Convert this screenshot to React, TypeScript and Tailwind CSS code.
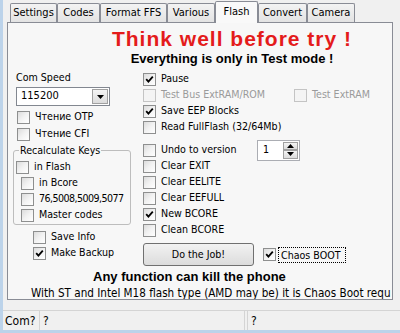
import React from "react";

const UI = "font-['DejaVu_Sans_Condensed','Liberation_Sans',sans-serif]";

function Box({ checked, disabled }: { checked?: boolean; disabled?: boolean }) {
  return (
    <span
      className={
        disabled
          ? "w-[13px] h-[13px] shrink-0 border border-[#c4c4c4] bg-[#f4f4f4] flex items-center justify-center"
          : "w-[13px] h-[13px] shrink-0 border border-[#8e8f8f] bg-gradient-to-br from-[#dcdcdc] via-[#f2f2f2] to-[#ffffff] flex items-center justify-center"
      }
    >
      {checked && (
        <svg width="9" height="9" viewBox="0 0 9 9">
          <path d="M1.2 4.2 L3.4 6.6 L7.8 1.6" fill="none" stroke="#000" strokeWidth="1.8" />
        </svg>
      )}
    </span>
  );
}

function Check({
  label,
  checked,
  disabled,
  className = "",
  labelClass = "",
}: {
  label: string;
  checked?: boolean;
  disabled?: boolean;
  className?: string;
  labelClass?: string;
}) {
  return (
    <div className={"flex items-center h-[16px] gap-[5px] whitespace-nowrap " + className}>
      <Box checked={checked} disabled={disabled} />
      <span className={(disabled ? "text-[#9a9a9a] " : "text-black ") + labelClass}>{label}</span>
    </div>
  );
}

function Tab({ label, w, active }: { label: string; w: string; active?: boolean }) {
  return active ? (
    <div
      className={
        w +
        " h-[22px] -mb-[1px] relative z-10 border border-b-0 border-[#898c95] bg-[#f9f9f9] rounded-t-[2px] flex items-start justify-center pt-[2px]"
      }
    >
      {label}
    </div>
  ) : (
    <div
      className={
        w +
        " h-[19px] border border-b-0 border-[#898c95] bg-gradient-to-b from-[#f3f3f3] to-[#e3e3e3] rounded-t-[2px] flex items-center justify-center"
      }
    >
      {label}
    </div>
  );
}

function TriDown() {
  return (
    <svg width="7" height="4" viewBox="0 0 7 4">
      <path d="M0 0 H7 L3.5 4 Z" fill="#000" />
    </svg>
  );
}
function TriUp() {
  return (
    <svg width="7" height="4" viewBox="0 0 7 4">
      <path d="M0 4 H7 L3.5 0 Z" fill="#000" />
    </svg>
  );
}

export default function App() {
  return (
    <div className={"w-[400px] h-[333px] overflow-hidden bg-[#f0f0f0] text-[10.6px] text-black border-l-[3px] border-b-[3px] border-[#bcd3ea] flex flex-col " + UI}>
      {/* tabs */}
      <div className="h-[22px] flex items-end pl-[7px] relative z-10 shrink-0 text-[11px]">
        <Tab label="Settings" w="w-[47px]" />
        <Tab label="Codes" w="w-[43px]" />
        <Tab label="Format FFS" w="w-[67px]" />
        <Tab label="Various" w="w-[48px]" />
        <Tab label="Flash" w="w-[43px]" active />
        <Tab label="Convert" w="w-[49px]" />
        <Tab label="Camera" w="w-[48px]" />
      </div>

      {/* panel */}
      <div className="ml-[4px] w-[386px] h-[278px] shrink-0 border border-[#898c95] bg-[#f7f7f7] overflow-hidden flex flex-col">
        <div className="mt-[3px] h-[26px] leading-[26px] pl-[64px] text-center font-bold text-[21px] tracking-[1px] text-[#e41b1b] font-['Liberation_Sans',sans-serif] whitespace-nowrap">
          Think well before try !
        </div>
        <div className="h-[14px] leading-[14px] pl-[64px] text-center font-bold text-[13px] font-['Liberation_Sans',sans-serif] whitespace-nowrap">
          Everything is only in Test mode !
        </div>

        <div className="flex items-start h-[214px]">
          {/* left column */}
          <div className="w-[135px] shrink-0 flex flex-col">
            <div className="mt-[4px] ml-[8px] h-[14px] leading-[14px]">Com Speed</div>
            <div className="mt-[3px] ml-[8px] w-[94px] h-[19px] border border-[#828790] bg-white flex items-center text-[11px]">
              <span className="flex-1 pl-[4px]">115200</span>
              <span className="w-[16px] h-[15px] mr-[1px] border border-[#a0a0a0] bg-gradient-to-b from-[#f4f4f4] to-[#dcdcdc] flex items-center justify-center">
                <TriDown />
              </span>
            </div>
            <Check label="Чтение OTP" className="mt-[3px] ml-[9px]" />
            <Check label="Чтение CFI" className="mt-[1px] ml-[9px]" />
            <fieldset className="mt-[1px] ml-[5px] w-[118px] border border-[#bdbdbd] rounded-[3px] pb-[1px]">
              <legend className="ml-[5px] px-[1px] h-[14px] leading-[14px]">Recalculate Keys</legend>
              <Check label="in Flash" className="mt-[2px] ml-[2px]" />
              <Check label="in Bcore" className="ml-[7px]" />
              <Check label="76,5008,5009,5077" className="ml-[7px] gap-[4px]" labelClass="tracking-[-0.55px]" />
              <Check label="Master codes" className="ml-[7px]" />
            </fieldset>
            <Check label="Save Info" className="mt-[4px] ml-[25px]" />
            <Check label="Make Backup" checked className="ml-[25px]" />
          </div>

          {/* right column */}
          <div className="flex flex-col">
            <Check label="Pause" checked className="mt-[5px]" />
            <div className="flex items-center">
              <Check label="Test Bus ExtRAM/ROM" disabled className="w-[151px]" />
              <Check label="Test ExtRAM" disabled />
            </div>
            <Check label="Save EEP Blocks" checked />
            <Check label="Read FullFlash (32/64Mb)" />
            <div className="flex items-center h-[16px] mt-[7px]">
              <Check label="Undo to version" className="w-[114px]" />
              <div className="w-[43px] h-[21px] border border-[#abadb3] bg-white flex items-center">
                <span className="flex-1 pl-[5px]">1</span>
                <div className="w-[15px] h-[17px] mr-[1px] flex flex-col">
                  <span className="h-[8px] border border-[#a0a0a0] bg-gradient-to-b from-[#f4f4f4] to-[#dcdcdc] flex items-center justify-center">
                    <TriUp />
                  </span>
                  <span className="h-[9px] border border-[#a0a0a0] bg-gradient-to-b from-[#f4f4f4] to-[#dcdcdc] flex items-center justify-center">
                    <TriDown />
                  </span>
                </div>
              </div>
            </div>
            <Check label="Clear EXIT" />
            <Check label="Clear EELITE" />
            <Check label="Clear EEFULL" />
            <Check label="New BCORE" checked />
            <Check label="Clean BCORE" />
            <div className="flex items-center mt-[5px]">
              <button className="w-[111px] h-[23px] border border-[#707070] rounded-[3px] bg-gradient-to-b from-[#f2f2f2] to-[#dcdcdc] text-[10.6px]">
                Do the Job!
              </button>
              <span className="ml-[9px]">
                <Box checked />
              </span>
              <span className="ml-[2px] w-[68px] h-[16px] border border-dotted border-black pl-[2px] leading-[14px] whitespace-nowrap">
                Chaos BOOT
              </span>
            </div>
          </div>
        </div>

        <div className="mt-[4px] h-[14px] leading-[14px] pl-[85px] font-bold text-[13px] font-['Liberation_Sans',sans-serif] whitespace-nowrap">
          Any function can kill the phone
        </div>
        <div className="mt-[2px] h-[14px] leading-[14px] pl-[23px] text-[11.6px] whitespace-nowrap">
          With ST and Intel M18 flash type (AMD may be) it is Chaos Boot requ
        </div>
      </div>

      {/* status bar */}
      <div className="mt-[10px] h-[20px] border-t border-[#d4d4d4] flex text-[12px] leading-[20px]">
        <div className="w-[37px] border-r border-[#d4d4d4] pl-[2px]">Com?</div>
        <div className="w-[205px] border-r border-[#d4d4d4] pl-[3px]">?</div>
        <div className="ml-[2px] flex-1 border-l border-[#d4d4d4] pl-[3px]">?</div>
      </div>
    </div>
  );
}
